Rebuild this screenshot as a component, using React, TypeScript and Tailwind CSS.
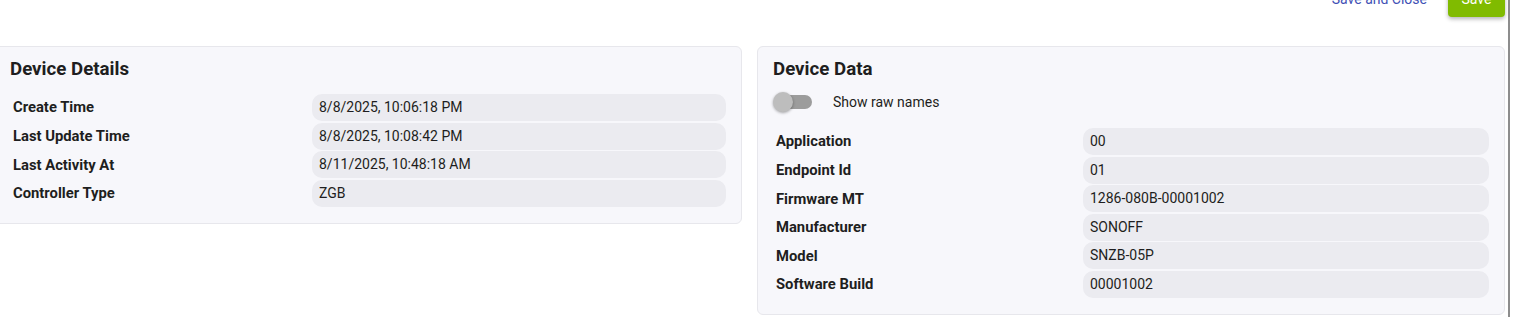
import { useState } from 'react'

type Field = { label: string; value: string }

const details: Field[] = [
  { label: 'Create Time', value: '8/8/2025, 10:06:18 PM' },
  { label: 'Last Update Time', value: '8/8/2025, 10:08:42 PM' },
  { label: 'Last Activity At', value: '8/11/2025, 10:48:18 AM' },
  { label: 'Controller Type', value: 'ZGB' },
]

const deviceData: Field[] = [
  { label: 'Application', value: '00' },
  { label: 'Endpoint Id', value: '01' },
  { label: 'Firmware MT', value: '1286-080B-00001002' },
  { label: 'Manufacturer', value: 'SONOFF' },
  { label: 'Model', value: 'SNZB-05P' },
  { label: 'Software Build', value: '00001002' },
]

function FieldRows({ rows, labelCol }: { rows: Field[]; labelCol: string }) {
  return (
    <div className="flex flex-col gap-[1.6px]">
      {rows.map((r) => (
        <div key={r.label} className={`grid ${labelCol} items-center`}>
          <div className="pl-[3px] text-[14.8px] font-bold text-[#1e1e20]">{r.label}</div>
          <div className="h-[27px] flex items-center rounded-[10px] bg-[#ebebf0] pl-[7px] text-[14px] text-[#1e1e20]">
            {r.value}
          </div>
        </div>
      ))}
    </div>
  )
}

function Card({ title, children }: { title: string; children: React.ReactNode }) {
  return (
    <div className="rounded-[6px] border border-[#e7e7ec] bg-[#f7f7fb] px-[15px] pt-[11px] pb-[16px]">
      <h2 className="text-[18.7px] leading-[23px] font-bold text-[#1e1e20]">{title}</h2>
      {children}
    </div>
  )
}

export default function App() {
  const [raw, setRaw] = useState(false)

  return (
    <div className="overflow-hidden h-[333px] bg-white" style={{ fontFamily: 'Roboto, "Liberation Sans", sans-serif' }}>
      <div className="-ml-[6px] -mt-[19px] w-[1516px] border-r-2 border-[#8d8d8d] pr-[3px] pb-[2px]">
        <div className="flex h-9 items-center justify-end gap-[21px]">
          <button className="text-[14px] text-[#3f51b5]">Save and Close</button>
          <button className="h-9 w-[57px] rounded-[4px] bg-[#80bb00] text-[14px] text-white shadow-[0_2px_4px_rgba(0,0,0,0.3)]">
            Save
          </button>
        </div>

        <div className="mt-[29px] grid grid-cols-2 items-start gap-[15px]">
          <Card title="Device Details">
            <div className="mt-[13px]">
              <FieldRows rows={details} labelCol="grid-cols-[302px_1fr]" />
            </div>
          </Card>

          <Card title="Device Data">
            <div className="mt-[7px] flex h-[28px] items-center">
              <button
                onClick={() => setRaw(!raw)}
                className="relative h-[20px] w-[40px] shrink-0"
                aria-label="Show raw names"
              >
                <span className="absolute left-[1px] top-[3px] h-[14px] w-[38px] rounded-full bg-[#9c9c9c]" />
                <span
                  className={`absolute top-0 h-[20px] w-[20px] rounded-full bg-[#bdbdbd] shadow-[0_1px_3px_rgba(0,0,0,0.35)] ${raw ? 'left-[20px]' : 'left-0'}`}
                />
              </button>
              <span className="ml-[20px] text-[14px] text-[#1e1e20]">Show raw names</span>
            </div>
            <div className="mt-[12px]">
              <FieldRows rows={deviceData} labelCol="grid-cols-[310px_1fr]" />
            </div>
          </Card>
        </div>
      </div>
    </div>
  )
}
